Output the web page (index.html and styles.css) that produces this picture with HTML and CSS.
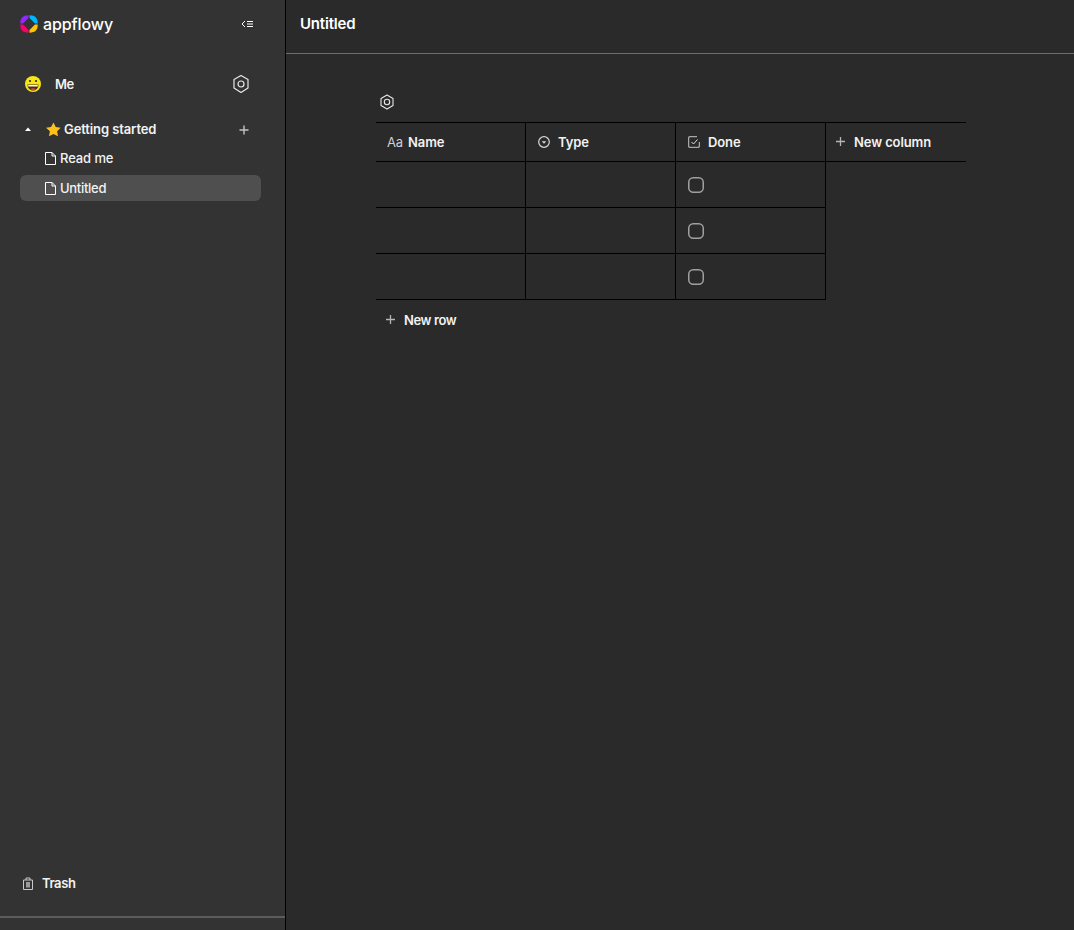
FILE: index.html
```html
<!DOCTYPE html>
<html lang="en">
<head>
<meta charset="utf-8">
<title>AppFlowy</title>
<link rel="stylesheet" href="styles.css">
</head>
<body>
<div class="app">
  <aside class="sidebar">
    <div class="brand">
      <svg class="logo" width="18" height="18" viewBox="0 0 18 18">
        <path fill="#9327ff" d="M8.500.3V3L3 8.500H.3C.1 3.500 2.500.3 8.500.3z"/>
        <path fill="#00b5ff" d="M9.500.3V3L15 8.500h2.700C17.900 3.500 15.500.3 9.500.3z"/>
        <path fill="#fb006d" d="M8.500 17.700V15L3 9.500H.3c-.2 5 2.200 8.200 8.200 8.200z"/>
        <path fill="#ffc400" d="M9.500 17.700V15L15 9.500h2.700c.2 5-2.200 8.200-8.200 8.200z"/>
      </svg>
      <span class="wordmark">appflowy</span>
      <svg class="collapse" width="12" height="8" viewBox="0 0 12 8" fill="none" stroke="#fff" stroke-width="1">
        <path d="M4 1 1 4l3 3M6 1.500h6M6 4h6M6 6.500h6"/>
      </svg>
    </div>
    <div class="user">
      <svg class="avatar" width="18" height="18" viewBox="0 0 18 18">
        <circle cx="9" cy="9" r="8" fill="#f6e71a"/>
        <path d="M3.500 9.500h11c0 3.500-2.500 6-5.500 6s-5.500-2.500-5.500-6z" fill="#4a2c10"/>
        <path d="M4.200 10h9.600v1.500H4.200z" fill="#fff"/>
        <path d="M6 14c1.500-1 4.500-1 6 0-1.500 1.500-4.500 1.500-6 0z" fill="#e2483f"/>
        <circle cx="6" cy="6" r="1.100" fill="#3a2a10"/>
        <circle cx="12" cy="6" r="1.100" fill="#3a2a10"/>
      </svg>
      <span class="user-name">Me</span>
      <svg class="gear" width="18" height="20" viewBox="0 0 18 20" fill="none" stroke="#e8e8e8" stroke-width="1.200">
        <path d="M9 1.500l7 4v8.500l-7 4.500-7-4.500V5.500z" stroke-linejoin="round"/>
        <circle cx="9" cy="10" r="3"/>
      </svg>
    </div>
    <div class="folder">
      <svg class="caret" width="6" height="4" viewBox="0 0 6 4"><path d="M0 4h6L3 .5z" fill="#fff"/></svg>
      <svg class="star" width="15" height="15" viewBox="0 0 15 15"><path d="M7.500.5l2.200 4.600 5 .7-3.600 3.500.9 5-4.500-2.400-4.500 2.400.9-5L0 5.800l5-.7z" fill="#fcc21b"/></svg>
      <span class="folder-name">Getting started</span>
      <svg class="plus-side" width="10" height="10" viewBox="0 0 10 10" fill="none" stroke="#c4c4c4" stroke-width="1.400"><path d="M5 .5v9M.5 5h9"/></svg>
    </div>
    <div class="page-row first">
      <svg class="doc" width="11" height="13" viewBox="0 0 11 13" fill="none" stroke="#fff"><path d="M1 .5h6l3.500 3.500v8.500H.5V.5zM7 .5V4h3.500"/></svg>
      <span>Read me</span>
    </div>
    <div class="page-row active">
      <svg class="doc" width="11" height="13" viewBox="0 0 11 13" fill="none" stroke="#fff"><path d="M1 .5h6l3.500 3.500v8.500H.5V.5zM7 .5V4h3.500"/></svg>
      <span class="tight">Untitled</span>
    </div>
    <div class="spacer"></div>
    <div class="trash">
      <svg class="trash-icon" width="10" height="13" viewBox="0 0 10 13" fill="none" stroke="#c8c8c8"><path d="M.5 3h9v9.500h-9zM3 3V1h4v2"/><path d="M3 5h4v5.500H3z" fill="#9a9a9a" stroke="none"/></svg>
      <span class="trash-label">Trash</span>
    </div>
    <div class="side-footer"></div>
  </aside>
  <main class="main">
    <header class="topbar"><h1 class="title">Untitled</h1></header>
    <section class="content">
      <div class="toolbar">
        <svg width="14" height="16" viewBox="0 0 14 16" fill="none" stroke="#e8e8e8" stroke-width="1.100">
          <path d="M7 1l6 3.500v7L7 15l-6-3.500v-7z" stroke-linejoin="round"/>
          <circle cx="7" cy="8" r="2.700"/>
        </svg>
      </div>
      <div class="table">
        <div class="row head">
          <div class="cell"><span class="aa">Aa</span><span>Name</span></div>
          <div class="cell">
            <svg class="ficon" width="12" height="12" viewBox="0 0 12 12" fill="none" stroke="#d8d8d8" stroke-width="1.200"><circle cx="6" cy="6" r="5.300"/><path d="M3.800 5.200h4.400L6 7.800z" fill="#d8d8d8" stroke="none"/></svg>
            <span>Type</span>
          </div>
          <div class="cell">
            <svg class="ficon" width="12" height="12" viewBox="0 0 12 12" fill="none" stroke="#a8a8a8" stroke-width="1.300"><path d="M11.400 6v4a1.500 1.500 0 0 1-1.500 1.400H2A1.500 1.500 0 0 1 .6 10V2A1.500 1.500 0 0 1 2 .6h7"/><path d="M3.500 6l2 2 4-4.500" stroke="#e0e0e0" stroke-width="1"/></svg>
            <span>Done</span>
          </div>
          <div class="cell cell-new">
            <svg class="ficon" width="9" height="9" viewBox="0 0 9 9" fill="none" stroke="#b5b5b5" stroke-width="1.300"><path d="M4.500 0v9M0 4.500h9"/></svg>
            <span>New column</span>
          </div>
        </div>
        <div class="row data"><div class="cell"></div><div class="cell"></div><div class="cell"><svg class="check" width="16" height="16" viewBox="0 0 16 16"><rect x=".75" y=".75" width="14.500" height="14.500" rx="4.500"/></svg></div></div>
        <div class="row data"><div class="cell"></div><div class="cell"></div><div class="cell"><svg class="check" width="16" height="16" viewBox="0 0 16 16"><rect x=".75" y=".75" width="14.500" height="14.500" rx="4.500"/></svg></div></div>
        <div class="row data"><div class="cell"></div><div class="cell"></div><div class="cell"><svg class="check" width="16" height="16" viewBox="0 0 16 16"><rect x=".75" y=".75" width="14.500" height="14.500" rx="4.500"/></svg></div></div>
      </div>
      <div class="new-row">
        <svg width="9" height="9" viewBox="0 0 9 9" fill="none" stroke="#b5b5b5" stroke-width="1.300"><path d="M4.500 0v9M0 4.500h9"/></svg>
        <span>New row</span>
      </div>
    </section>
  </main>
</div>
</body>
</html>
```

FILE: styles.css
```css
* { box-sizing: border-box; }
html, body { margin: 0; height: 100%; }
body {
  font-family: "Inter", "Liberation Sans", sans-serif;
  font-size: 13px;
  font-weight: 500;
  letter-spacing: -0.1px;
  color: #f2f2f2;
  background: #2a2a2a;
  overflow: hidden;
}
.app { display: flex; height: 930px; }

.sidebar {
  width: 286px;
  flex: none;
  display: flex;
  flex-direction: column;
  background: #333333;
  border-right: 1px solid #000;
}
.brand {
  display: flex;
  align-items: center;
  height: 48px;
  padding: 0 32px 0 20px;
}
.logo { flex: none; }
.wordmark {
  margin-left: 5px;
  font-size: 16px;
  font-weight: 500;
  color: #fff;
  letter-spacing: -0.1px;
}
.collapse { margin-left: auto; }
.user {
  display: flex;
  align-items: center;
  height: 24px;
  margin-top: 24px;
  padding: 0 35px 0 24px;
}
.user-name { margin-left: 13px; font-weight: 600; letter-spacing: -0.4px; }
.gear { margin-left: auto; }
.folder {
  display: flex;
  align-items: center;
  height: 20px;
  margin-top: 23px;
  padding: 0 36px 0 25px;
}
.caret { margin-bottom: 1px; }
.star { margin-left: 15px; }
.folder-name { margin-left: 3px; font-weight: 600; }
.plus-side { margin-left: auto; margin-top: 1px; }
.page-row {
  display: flex;
  align-items: center;
  gap: 4px;
  height: 26px;
  margin: 4px 24px 0 20px;
  padding-left: 25px;
  border-radius: 6px;
}
.page-row.first { margin-top: 6px; }
.page-row.active { background: #4f4f4f; }
.page-row span { margin-bottom: 1px; }
.tight { letter-spacing: -0.3px; }
.spacer { flex: 1; }
.trash {
  display: flex;
  align-items: center;
  height: 20px;
  padding-left: 23px;
  margin-bottom: 23px;
}
.trash-label { margin-left: 9px; font-weight: 600; letter-spacing: -0.4px; }
.side-footer {
  height: 14px;
  border-top: 2px solid #5c5c5c;
}

.main { flex: 1; display: flex; flex-direction: column; min-width: 0; }
.topbar {
  height: 54px;
  display: flex;
  align-items: center;
  padding: 0 0 6px 14px;
  border-bottom: 1px solid #6e6e6e;
}
.title { margin: 0; font-size: 15px; font-weight: 600; color: #fff; letter-spacing: -0.2px; }
.content { padding: 34px 0 0 90px; }
.toolbar {
  display: flex;
  align-items: center;
  height: 34px;
  padding: 0 0 6px 4px;
}
.table { width: 590px; }
.row { display: flex; }
.cell {
  width: 150px;
  flex: none;
  display: flex;
  align-items: center;
  border-right: 1px solid #000;
  padding-left: 11px;
}
.head {
  height: 40px;
  border-top: 1px solid #000;
  border-bottom: 1px solid #000;
  font-weight: 600;
}
.head .cell { padding: 0 0 1px 12px; }
.cell-new { width: 140px; border-right: 0; }
.head .cell-new { padding-left: 10px; border-right: 0; }
.data {
  height: 46px;
  width: 450px;
  border-bottom: 1px solid #000;
}
.aa { margin-left: -1px; margin-right: 5px; font-weight: 400; color: #cfcfcf; }
.ficon { margin-right: 8px; flex: none; }
.cell-new .ficon { margin-right: 9px; }
.check {
  margin-left: 1px;
  fill: none;
  stroke: #a0a0a0;
  stroke-width: 1.5;
}
.new-row {
  display: flex;
  align-items: center;
  height: 40px;
  padding: 0 0 1px 10px;
  font-weight: 600;
  letter-spacing: -0.4px;
}
.new-row span { margin-left: 9px; }
```
